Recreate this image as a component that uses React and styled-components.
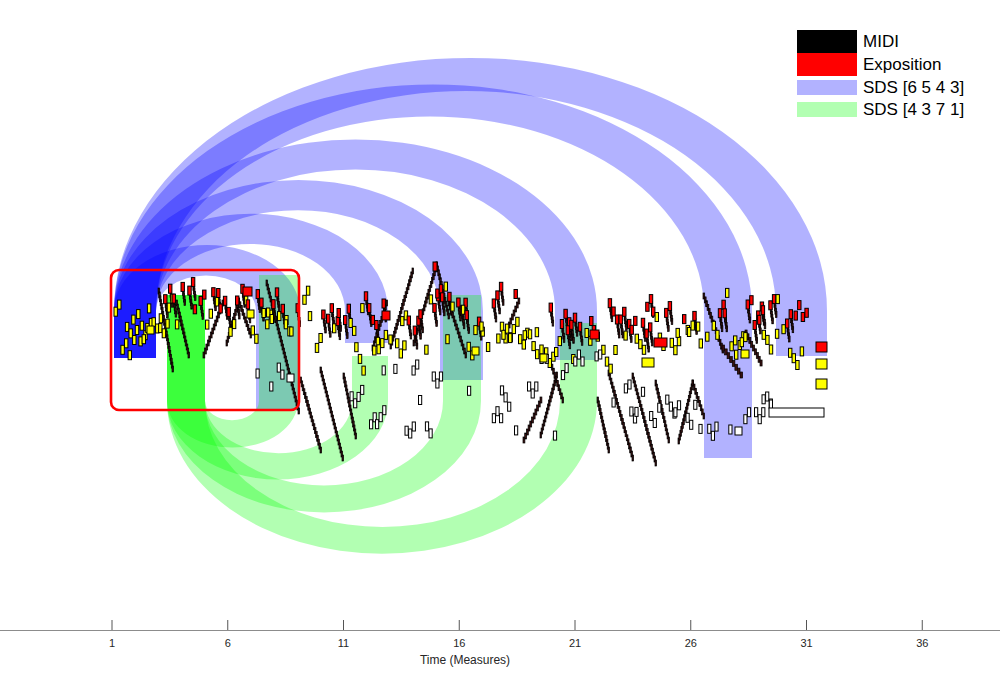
import React, { useMemo } from "react";
import styled, { createGlobalStyle } from "styled-components";

const GlobalStyle = createGlobalStyle`
  html, body {
    margin: 0;
    padding: 0;
    background: #fff;
  }
  body {
    font-family: "Liberation Sans", Arial, sans-serif;
  }
`;

const Figure = styled.div`
  position: relative;
  width: 1000px;
  height: 700px;
  background: #fff;
  overflow: hidden;
`;

const Plot = styled.svg`
  display: block;
  width: 1000px;
  height: 700px;
`;

const Band = styled.path`
  fill: ${(p) => p.$color};
  fill-opacity: 0.3;
`;

const Note = styled.rect`
  fill: ${(p) => p.$fill};
  stroke: #000;
  stroke-width: ${(p) => (p.$thin ? 0.7 : 1)};
`;

const Highlight = styled.rect`
  fill: none;
  stroke: #ff0000;
  stroke-width: 2.6;
`;

const AxisLine = styled.line`
  stroke: #8c8c8c;
  stroke-width: 1.2;
`;

const Tick = styled.line`
  stroke: #555;
  stroke-width: 1;
`;

const TickLabel = styled.text`
  font-family: "Liberation Sans", Arial, sans-serif;
  font-size: 11px;
  fill: #262626;
  text-anchor: middle;
`;

const AxisTitle = styled(TickLabel)`
  font-size: 12px;
`;

const Legend = styled.div`
  position: absolute;
  top: 30px;
  left: 797px;
  display: flex;
  flex-direction: column;
`;

const LegendRow = styled.div`
  display: flex;
  align-items: center;
  gap: 6px;
  height: ${(p) => p.$h}px;
`;

const Swatch = styled.span`
  display: block;
  width: 60px;
  height: ${(p) => p.$h}px;
  background: ${(p) => p.$color};
`;

const LegendLabel = styled.span`
  font-size: 17px;
  line-height: 1;
  color: #000;
  white-space: nowrap;
`;

const RED = "#ff0000";
const YELLOW = "#ffff00";
const WHITE = "#ffffff";
const DARK = "#3a1010";

const X = (m) => 112 + (m - 1) * 23.15;
const TICKS = [1, 6, 11, 16, 21, 26, 31, 36];

const K = 0.71;
const BLUE_SRC = { a: 114, b: 156, bottom: 358, base: 311 };
const BLUE_TARGETS = [
  { a: 256, b: 300, end: 410 },
  { a: 345, b: 388, end: 343 },
  { a: 440, b: 483, end: 380 },
  { a: 555, b: 597, end: 360 },
  { a: 704, b: 752, end: 458 },
  { a: 776, b: 827, end: 356 },
];
const GREEN_SRC = { a: 167, b: 205, top: 295, base: 401 };
const GREEN_TARGETS = [
  { a: 259, b: 298, end: 275 },
  { a: 352, b: 388, end: 356 },
  { a: 443, b: 481, end: 295 },
  { a: 560, b: 597, end: 323 },
];

const TOP_CONTOUR = [
  [114, 302], [160, 282], [200, 276], [240, 284], [270, 276], [300, 290],
  [340, 290], [380, 292], [420, 298], [440, 286], [470, 290], [500, 285],
  [540, 290], [560, 300], [600, 296], [640, 300], [680, 290], [700, 286],
  [740, 300], [780, 298], [826, 300],
];

// lower register, white notes: [x0, x1, yTop, yBottom]
const LOW_ZONES = [
  [256, 300, 352, 392],
  [350, 440, 360, 438],
  [452, 530, 378, 440],
  [540, 600, 350, 455],
  [612, 700, 380, 440],
  [702, 772, 392, 442],
];

// fast scale runs, drawn as chains of thin notes
const RUNS = [
  [158, 288, 172, 366], [176, 300, 188, 352], [203, 352, 222, 300],
  [226, 340, 238, 298], [238, 298, 250, 332], [266, 280, 298, 408],
  [300, 377, 320, 447], [320, 367, 342, 455], [343, 373, 355, 433],
  [372, 345, 386, 300], [390, 343, 412, 268], [413, 340, 436, 262],
  [436, 262, 448, 313], [448, 300, 465, 352], [505, 330, 518, 298],
  [523, 437, 540, 397], [540, 432, 556, 372], [550, 360, 562, 397],
  [597, 397, 608, 447], [608, 370, 632, 455], [632, 373, 655, 460],
  [655, 380, 668, 437], [678, 438, 692, 380], [692, 380, 703, 413],
  [703, 293, 722, 347], [722, 345, 740, 372], [745, 330, 760, 360],
];

const SPECIAL = [
  { x: 243, y: 287, w: 9, h: 9, fill: RED },
  { x: 382, y: 311, w: 8, h: 9, fill: RED },
  { x: 433, y: 262, w: 4, h: 9, fill: RED },
  { x: 590, y: 330, w: 9, h: 9, fill: RED },
  { x: 654, y: 338, w: 13, h: 9, fill: RED },
  { x: 642, y: 358, w: 12, h: 9, fill: YELLOW },
  { x: 147, y: 326, w: 7, h: 8, fill: YELLOW },
  { x: 247, y: 310, w: 7, h: 8, fill: YELLOW },
  { x: 472, y: 347, w: 7, h: 8, fill: YELLOW },
  { x: 540, y: 354, w: 7, h: 8, fill: YELLOW },
  { x: 741, y: 350, w: 8, h: 8, fill: YELLOW },
  { x: 287, y: 374, w: 7, h: 8, fill: WHITE },
  { x: 735, y: 427, w: 7, h: 8, fill: WHITE },
  { x: 769, y: 408, w: 55, h: 9, fill: WHITE },
  { x: 816, y: 342, w: 11, h: 10, fill: RED },
  { x: 816, y: 359, w: 11, h: 10, fill: YELLOW },
  { x: 816, y: 379, w: 11, h: 10, fill: YELLOW },
];

function mulberry32(seed) {
  let a = seed;
  return () => {
    a = (a + 0x6d2b79f5) | 0;
    let t = Math.imul(a ^ (a >>> 15), 1 | a);
    t = (t + Math.imul(t ^ (t >>> 7), 61 | t)) ^ t;
    return ((t ^ (t >>> 14)) >>> 0) / 4294967296;
  };
}

function topAt(x) {
  for (let i = 1; i < TOP_CONTOUR.length; i++) {
    const [x0, y0] = TOP_CONTOUR[i - 1];
    const [x1, y1] = TOP_CONTOUR[i];
    if (x <= x1) return y0 + ((y1 - y0) * (x - x0)) / (x1 - x0);
  }
  return 300;
}

// a scale run: staircase of narrow dark notes
function runNotes(x0, y0, x1, y1) {
  const steps = Math.max(2, Math.round(Math.abs(y1 - y0) / 4));
  const w = Math.max(1.6, Math.abs(x1 - x0) / (steps + 1) + 0.4);
  const out = [];
  for (let i = 0; i <= steps; i++) {
    out.push({
      x: x0 + ((x1 - x0) * i) / steps,
      y: y0 + ((y1 - y0) * i) / steps,
      w,
      h: 6,
      fill: DARK,
      thin: true,
    });
  }
  return out;
}

function buildNotes() {
  const rnd = mulberry32(23);
  const notes = [];
  const stems = [];

  for (let x = 114; x < 810; x += 4.4 + rnd() * 2.6) {
    const top = topAt(x);
    let y = top + rnd() * 56;
    let dir = rnd() < 0.5 ? -1 : 1;
    const n = 1 + Math.floor(rnd() * 3);
    for (let i = 0; i < n; i++) {
      const nx = x + i * 3.6;
      const red = x > 160 && y < top + 30 && rnd() < 0.85;
      notes.push({ x: nx, y, w: 3.4, h: 9, fill: red ? RED : YELLOW });
      if (red && rnd() < 0.75) {
        stems.push(...runNotes(nx + 1.5, y + 7, nx + 3, y + 17));
      }
      y += dir * (5 + rnd() * 7);
      if (rnd() < 0.5) dir = -dir;
      y = Math.min(Math.max(y, top - 4), top + 78);
    }
  }

  LOW_ZONES.forEach(([x0, x1, yt, yb]) => {
    for (let x = x0; x < x1; x += 5 + rnd() * 3.5) {
      if (rnd() < 0.3) continue;
      let y = yt + rnd() * (yb - yt - 10);
      const n = 1 + Math.floor(rnd() * 3);
      for (let i = 0; i < n; i++) {
        notes.push({ x: x + i * 3.6, y, w: 3.2, h: 9, fill: WHITE });
        y = Math.min(Math.max(y + (rnd() < 0.5 ? -7 : 7), yt), yb - 9);
      }
    }
  });

  RUNS.forEach(([x0, y0, x1, y1]) => stems.push(...runNotes(x0, y0, x1, y1)));
  return [...stems, ...notes, ...SPECIAL];
}

function blueBand(t) {
  const { a: sa, b: sb, bottom, base } = BLUE_SRC;
  const rx = (t.b - sa) / 2;
  const rx2 = (t.a - sb) / 2;
  return `M${sa},${bottom} L${sa},${base} A${rx},${rx * K} 0 0 1 ${t.b},${base} L${t.b},${t.end} L${t.a},${t.end} L${t.a},${base} A${rx2},${rx2 * K} 0 0 0 ${sb},${base} L${sb},${bottom} Z`;
}

function greenBand(t) {
  const { a: sa, b: sb, top, base } = GREEN_SRC;
  const rx = (t.b - sa) / 2;
  const rx2 = (t.a - sb) / 2;
  return `M${sa},${top} L${sa},${base} A${rx},${rx * K} 0 0 0 ${t.b},${base} L${t.b},${t.end} L${t.a},${t.end} L${t.a},${base} A${rx2},${rx2 * K} 0 0 1 ${sb},${base} L${sb},${top} Z`;
}

const LEGEND = [
  { label: "MIDI", color: "#000000", h: 23, sh: 23 },
  { label: "Exposition", color: "#ff0000", h: 23, sh: 23 },
  { label: "SDS [6 5 4 3]", color: "#b2b2ff", h: 23, sh: 15 },
  { label: "SDS [4 3 7 1]", color: "#b2ffb2", h: 21, sh: 15 },
];

function App() {
  const notes = useMemo(buildNotes, []);

  return (
    <>
      <GlobalStyle />
      <Figure>
        <Plot viewBox="0 0 1000 700">
          <g>
            {BLUE_TARGETS.map((t, i) => (
              <Band key={`b${i}`} d={blueBand(t)} $color="#0000ff" />
            ))}
            {GREEN_TARGETS.map((t, i) => (
              <Band key={`g${i}`} d={greenBand(t)} $color="#00ff00" />
            ))}
          </g>
          <g>
            {notes.map((n, i) => (
              <Note
                key={i}
                x={n.x.toFixed(1)}
                y={n.y.toFixed(1)}
                width={n.w.toFixed(1)}
                height={n.h}
                $fill={n.fill}
                $thin={n.thin}
              />
            ))}
          </g>
          <Highlight x="111" y="270" width="188" height="140" rx="8" />
          <g>
            <AxisLine x1="0" y1="630.5" x2="1000" y2="630.5" />
            {TICKS.map((m) => (
              <g key={m}>
                <Tick x1={X(m)} y1="620" x2={X(m)} y2="630" />
                <TickLabel x={X(m)} y="647">
                  {m}
                </TickLabel>
              </g>
            ))}
            <AxisTitle x="465" y="664">
              Time (Measures)
            </AxisTitle>
          </g>
        </Plot>
        <Legend>
          {LEGEND.map((item) => (
            <LegendRow key={item.label} $h={item.h}>
              <Swatch $color={item.color} $h={item.sh} />
              <LegendLabel>{item.label}</LegendLabel>
            </LegendRow>
          ))}
        </Legend>
      </Figure>
    </>
  );
}

export default App;
